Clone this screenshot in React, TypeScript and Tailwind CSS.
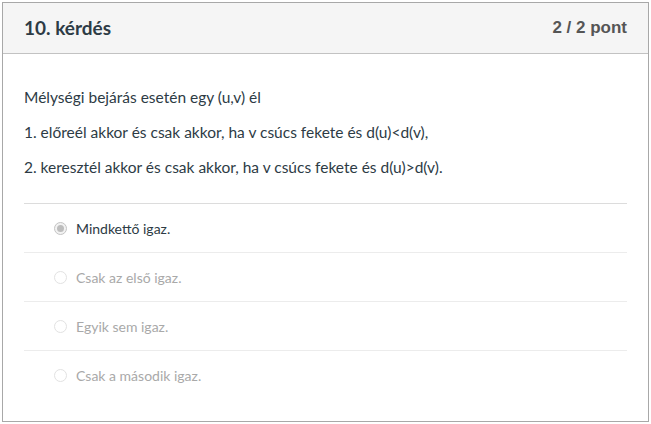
import React from 'react';

type Answer = { text: string; selected?: boolean };

const answers: Answer[] = [
  { text: 'Mindkettő igaz.', selected: true },
  { text: 'Csak az első igaz.' },
  { text: 'Egyik sem igaz.' },
  { text: 'Csak a második igaz.' },
];

const Radio: React.FC<{ checked?: boolean }> = ({ checked }) => (
  <span
    className={
      'flex h-[13px] w-[13px] items-center justify-center rounded-full border ' +
      (checked ? 'border-[#c4c4c4] bg-[#f2f2f2]' : 'border-[#e2e2e2] bg-white')
    }
  >
    {checked && <span className="h-[7px] w-[7px] rounded-full bg-[#bdbdbd]" />}
  </span>
);

export default function App() {
  return (
    <div className="p-[2px] font-['Lato',sans-serif]">
      <div className="h-[420px] w-[647px] border border-[#a8a8a8] bg-white">
        {/* Header */}
        <div className="flex h-[51px] items-center justify-between border-b border-[#c2c2c2] bg-[#f5f5f5] pl-[21px] pr-[21px]">
          <h2 className="text-[19px] font-bold text-[#2d3b45]">10. kérdés</h2>
          <span className="font-['Liberation_Sans',sans-serif] text-[17px] font-bold text-[#555]">2 / 2 pont</span>
        </div>

        {/* Question */}
        <div className="px-[21px]">
          <div className="pt-[33px] text-[15.5px] leading-[20px] text-[#2d3b45]">
            <p>Mélységi bejárás esetén egy (u,v) él</p>
            <p className="mt-[15px]">1. előreél akkor és csak akkor, ha v csúcs fekete és d(u)&lt;d(v),</p>
            <p className="mt-[15px]">2. keresztél akkor és csak akkor, ha v csúcs fekete és d(u)&gt;d(v).</p>
          </div>

          <div className="mt-[26px] border-t border-[#dcdcdc]">
            {answers.map((a, i) => (
              <div
                key={a.text}
                className={
                  'flex h-[49px] items-center gap-[9px] pl-[30px] ' +
                  (i < answers.length - 1 ? 'border-b border-[#ececec]' : '')
                }
              >
                <Radio checked={a.selected} />
                <span className={'text-[14px] ' + (a.selected ? 'text-[#2d3b45]' : 'text-[#a9a9a9]')}>
                  {a.text}
                </span>
              </div>
            ))}
          </div>
        </div>
      </div>
    </div>
  );
}
